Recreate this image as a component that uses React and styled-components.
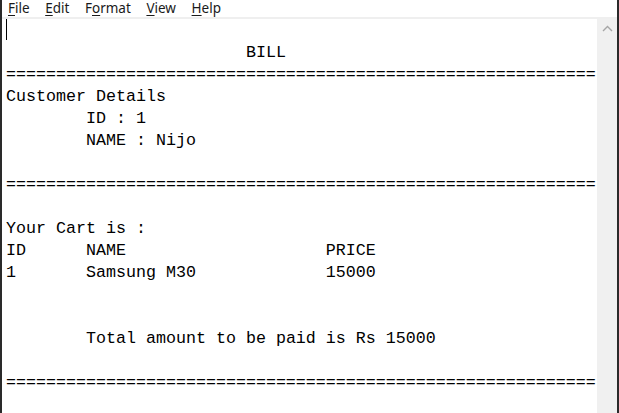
import styled, { createGlobalStyle } from 'styled-components'

const GlobalStyle = createGlobalStyle`
  html, body {
    margin: 0;
    padding: 0;
    background: #ffffff;
  }
`

const RULE = '='.repeat(59)

const lines = [
  '',
  '\t\t\tBILL',
  RULE,
  'Customer Details',
  '\tID : 1',
  '\tNAME : Nijo',
  '',
  RULE,
  '',
  'Your Cart is :',
  'ID\tNAME\t\t\tPRICE',
  '1\tSamsung M30\t\t15000',
  '',
  '',
  '\tTotal amount to be paid is Rs 15000',
  '',
  RULE,
  '',
]

const menus = [
  { key: 'F', rest: 'ile' },
  { key: 'E', rest: 'dit' },
  { pre: 'F', key: 'o', rest: 'rmat' },
  { key: 'V', rest: 'iew' },
  { key: 'H', rest: 'elp' },
]

const Window = styled.div`
  height: 100vh;
  display: flex;
  flex-direction: column;
  border-left: 2px solid #2a2a2a;
  border-right: 2px solid #2a2a2a;
  box-sizing: border-box;
  overflow: hidden;
`

const MenuBar = styled.div`
  height: 17px;
  display: flex;
  align-items: center;
  padding-left: 4px;
  background: #ffffff;
  border-bottom: 2px solid #efefef;
  font-family: 'Noto Sans', 'Open Sans', sans-serif;
  font-size: 13.5px;
  color: #1a1a1a;
`

const MenuItem = styled.span`
  padding: 0 6px 1px 2px;
  margin-right: 7.6px;
  line-height: 16px;
`

const Mnemonic = styled.span`
  text-decoration: underline;
  text-underline-offset: 2px;
`

const EditorRow = styled.div`
  flex: 1;
  display: flex;
  min-height: 0;
`

const TextArea = styled.div`
  flex: 1;
  padding-left: 4px;
  font-family: 'Liberation Mono', 'DejaVu Sans Mono', monospace;
  font-size: 16.67px;
  line-height: 22px;
  color: #000000;
  white-space: pre;
  tab-size: 8;
  overflow: hidden;
`

const Line = styled.div`
  height: 22px;
  padding-top: 1px;
  box-sizing: border-box;
`

const Caret = styled.span`
  display: inline-block;
  width: 1px;
  height: 21px;
  margin-top: -1px;
  background: #000000;
  vertical-align: top;
`

const ScrollBar = styled.div`
  width: 20px;
  background: #f0f0f0;
  display: flex;
  flex-direction: column;
  align-items: center;
  padding-top: 6px;
  box-sizing: border-box;
`

const Notepad = () => {
  return (
    <Window>
      <MenuBar>
        {menus.map(m => (
          <MenuItem key={m.rest}>
            {m.pre}
            <Mnemonic>{m.key}</Mnemonic>
            {m.rest}
          </MenuItem>
        ))}
      </MenuBar>
      <EditorRow>
        <TextArea>
          {lines.map((text, i) => (
            <Line key={i}>{i === 0 ? <Caret /> : text}</Line>
          ))}
        </TextArea>
        <ScrollBar>
          <svg width="11" height="7" viewBox="0 0 11 7">
            <path d="M1 6 L5.5 1.5 L10 6" fill="none" stroke="#a6a6a6" strokeWidth="1.4" />
          </svg>
        </ScrollBar>
      </EditorRow>
    </Window>
  )
}

export default function App() {
  return (
    <>
      <GlobalStyle />
      <Notepad />
    </>
  )
}
